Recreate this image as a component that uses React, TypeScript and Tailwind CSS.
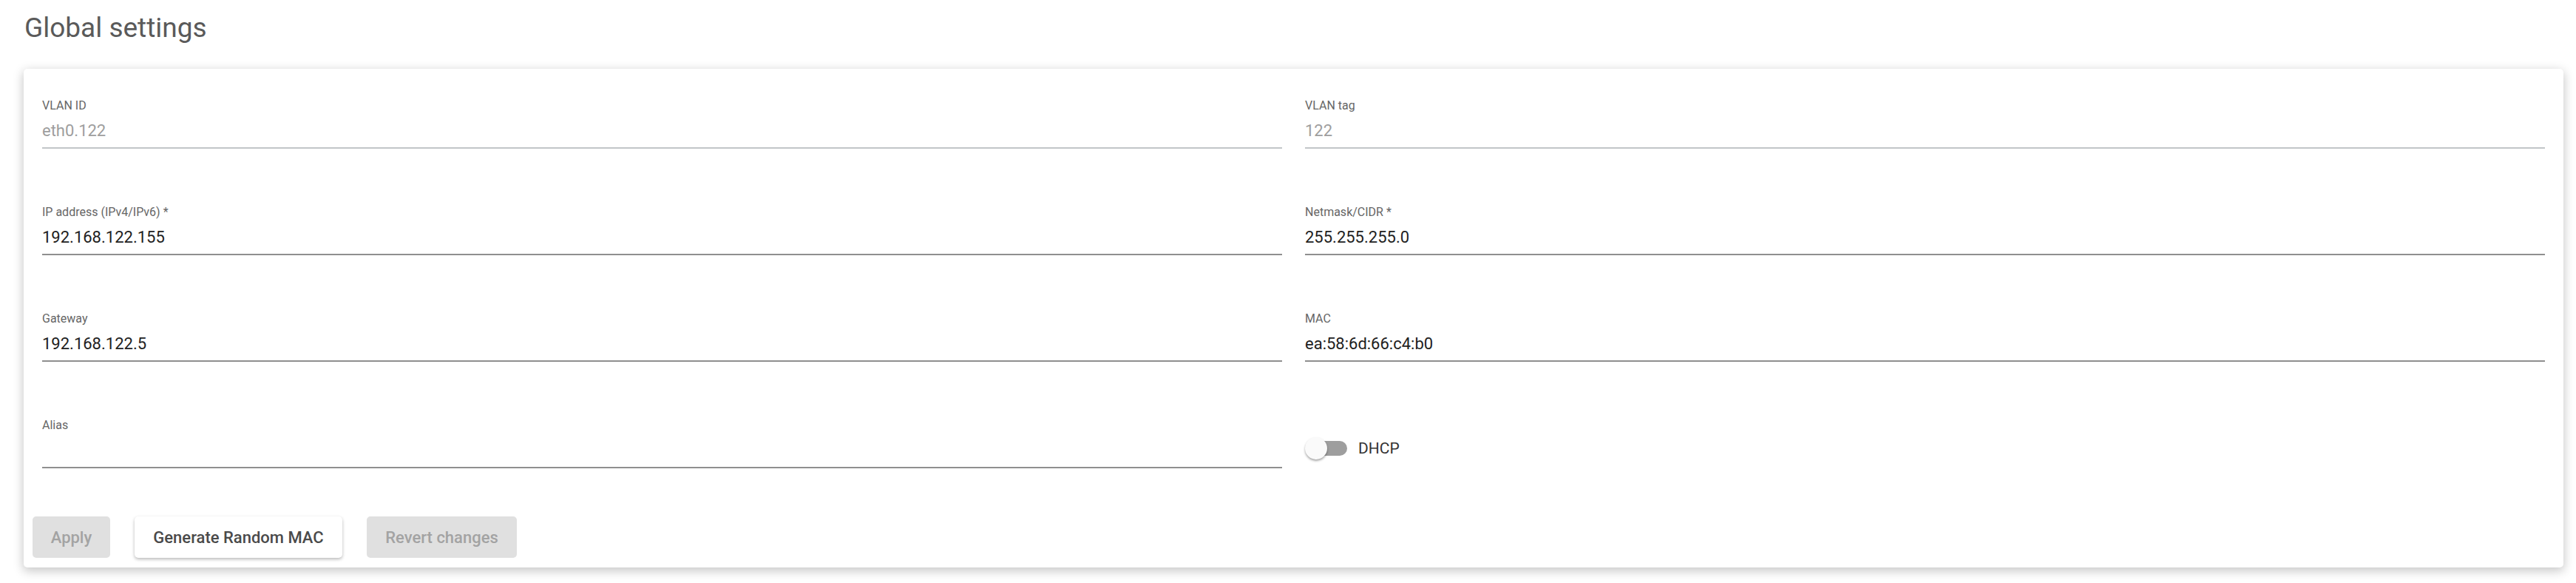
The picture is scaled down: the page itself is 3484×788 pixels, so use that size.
const font = { fontFamily: "Roboto, 'Noto Sans', 'Liberation Sans', sans-serif" }

type FieldProps = {
    label: string
    value?: string
    disabled?: boolean
}

const Field = ({ label, value = "", disabled = false }: FieldProps) => {
    return (
        <div className="flex flex-col">
            <div className="text-[16px] leading-none h-[16px] text-[#666666]">{label}</div>
            <div
                className={
                    disabled
                        ? "mt-[15px] pb-[11px] border-b-2 border-[#c2c5c8]"
                        : "mt-[15px] pb-[11px] border-b-2 border-[#8f8f8f]"
                }
            >
                <div
                    className={
                        disabled
                            ? "h-[22px] text-[22px] leading-none text-[#9e9e9e]"
                            : "h-[22px] text-[22px] leading-none text-[#212121]"
                    }
                >
                    {value}
                </div>
            </div>
        </div>
    )
}

const DhcpSwitch = () => {
    return (
        <div className="pt-[24px]">
            <div className="flex items-center h-[30px]">
                <div className="relative w-[57px] h-[30px] flex items-center">
                    <div className="ml-[10px] w-[47px] h-[20px] rounded-full bg-[#9e9e9e]" />
                    <div className="absolute left-0 top-0 w-[30px] h-[30px] rounded-full bg-[#fafafa] shadow-[0_2px_3px_rgba(0,0,0,0.35)]" />
                </div>
                <span className="ml-[15px] text-[21px] leading-none text-[#333333]">DHCP</span>
            </div>
        </div>
    )
}

const App = () => {
    return (
        <div className="w-full min-h-[788px] bg-white" style={font}>
            <h1 className="pt-[19px] pl-[33px] text-[37px] leading-none font-normal text-[#5a5a5a]">
                Global settings
            </h1>

            <div className="mt-[37px] ml-[32px] mr-[17px] bg-white rounded-[5px] shadow-[0_4px_14px_1px_rgba(0,0,0,0.22)]">
                <div className="grid grid-cols-2 gap-x-[31px] gap-y-[78px] px-[25px] pt-[42px]">
                    <Field label="VLAN ID" value="eth0.122" disabled />
                    <Field label="VLAN tag" value="122" disabled />
                    <Field label="IP address (IPv4/IPv6) *" value="192.168.122.155" />
                    <Field label="Netmask/CIDR *" value="255.255.255.0" />
                    <Field label="Gateway" value="192.168.122.5" />
                    <Field label="MAC" value="ea:58:6d:66:c4:b0" />
                    <Field label="Alias" />
                    <DhcpSwitch />
                </div>

                <div className="flex items-center gap-x-[33px] px-[12px] pt-[65px] pb-[13px]">
                    <button className="w-[105px] h-[56px] rounded-[5px] bg-[#e0e0e0] text-[22px] font-medium text-[#a3a3a3]">
                        Apply
                    </button>
                    <button className="w-[281px] h-[56px] rounded-[5px] bg-white text-[22px] font-medium text-[#4a4a4a] shadow-[0_2px_4px_rgba(0,0,0,0.28)]">
                        Generate Random MAC
                    </button>
                    <button className="w-[203px] h-[56px] rounded-[5px] bg-[#e0e0e0] text-[22px] font-medium text-[#a3a3a3]">
                        Revert changes
                    </button>
                </div>
            </div>
        </div>
    )
}

export default App
